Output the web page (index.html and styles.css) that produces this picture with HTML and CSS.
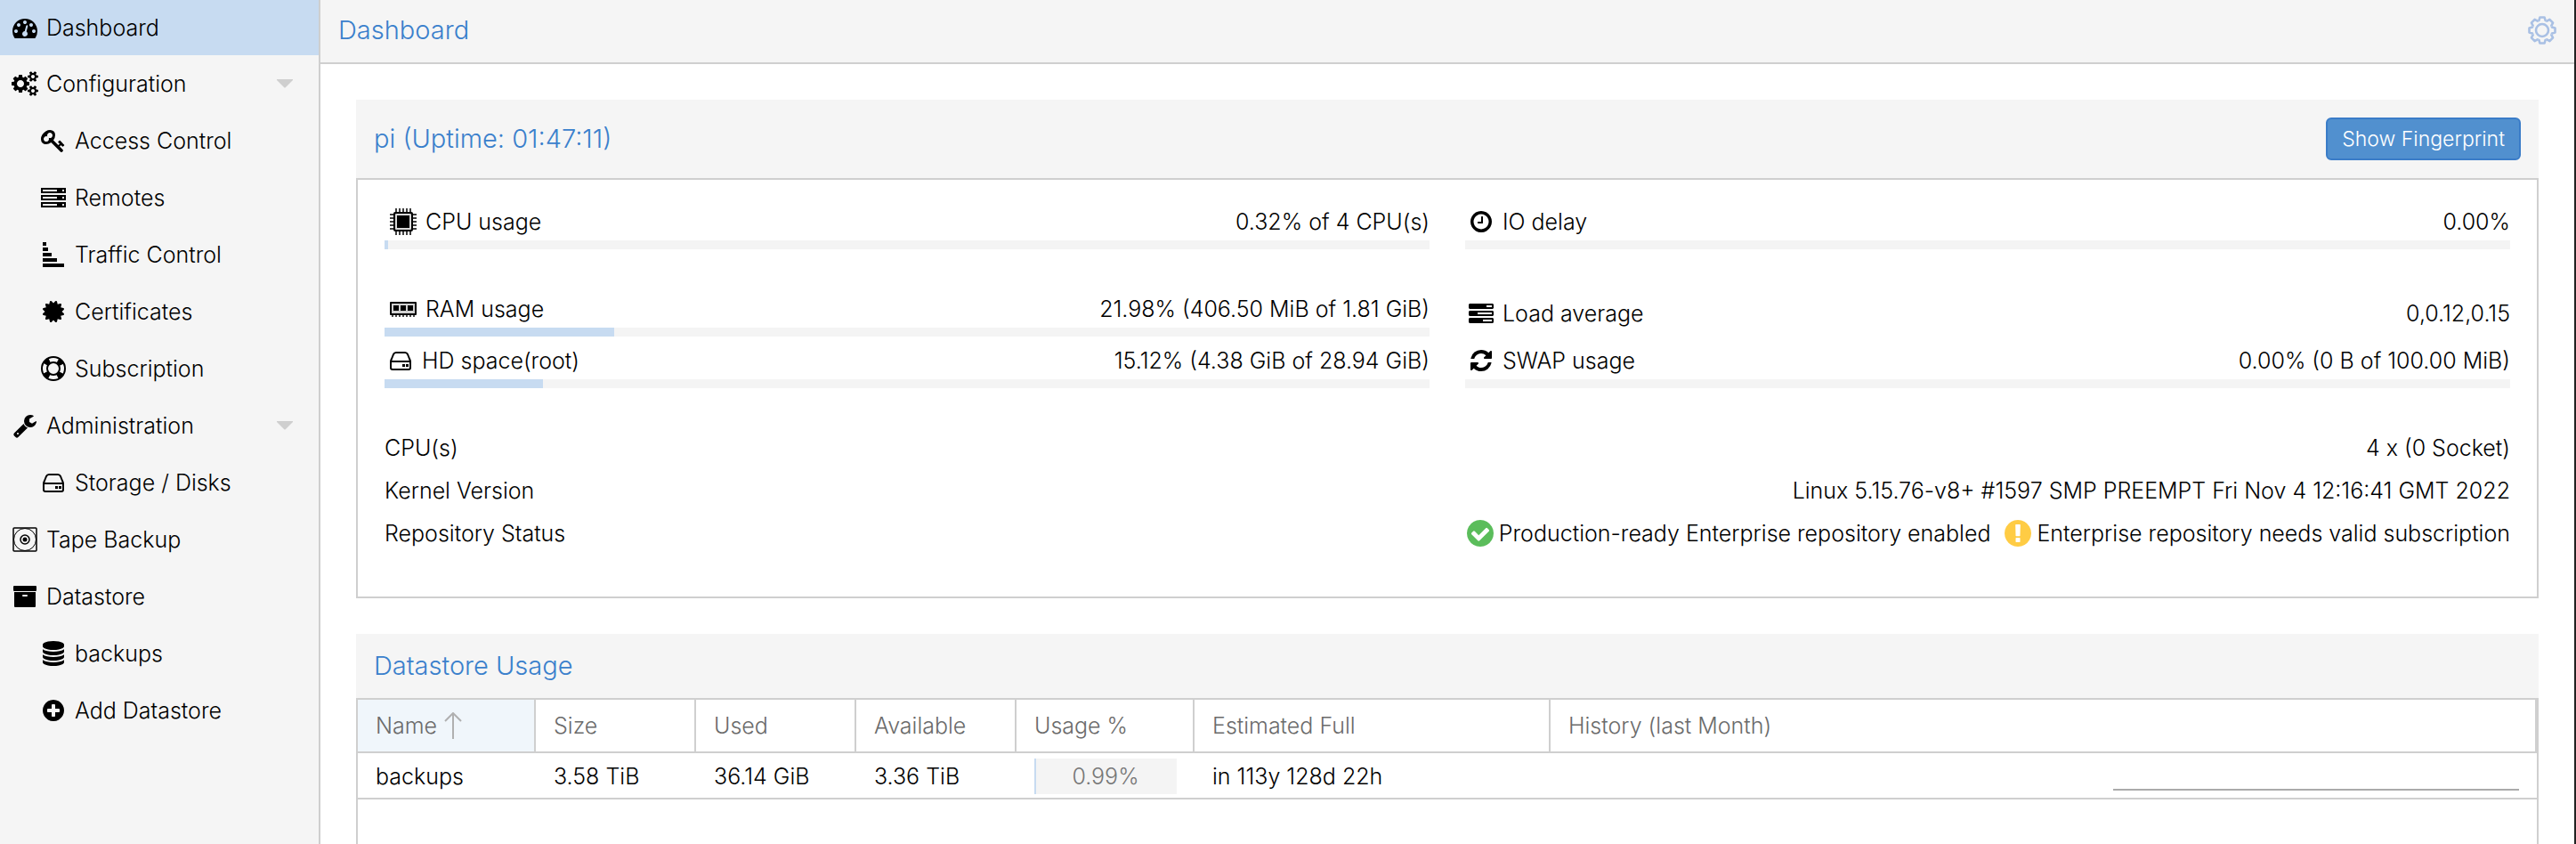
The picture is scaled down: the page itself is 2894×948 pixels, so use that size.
FILE: index.html
```html
<!DOCTYPE html>
<html lang="en">
<head>
<meta charset="utf-8">
<title>pi - Backup Server Dashboard</title>
<link rel="stylesheet" href="styles.css">
</head>
<body>
<svg class="sprite" aria-hidden="true">
  <symbol id="i-dash" viewBox="0 0 1792 1792"><path d="M384 1152q0-53-37.500-90.500t-90.500-37.500-90.500 37.500-37.500 90.500 37.500 90.500 90.500 37.500 90.500-37.500 37.500-90.500zm192-448q0-53-37.500-90.500t-90.500-37.500-90.500 37.500-37.500 90.500 37.500 90.500 90.500 37.500 90.500-37.500 37.500-90.500zm428 481l101-382q6-26-7.500-48.500t-38.500-29.500-48 6.500-30 39.500l-101 382q-60 5-107 43.500t-63 98.500q-20 77 20 146t117 89 146-20 89-117q16-60-6-117t-72-91zm660-33q0-53-37.500-90.500t-90.500-37.500-90.500 37.500-37.500 90.500 37.500 90.500 90.500 37.500 90.500-37.500 37.500-90.500zm-640-640q0-53-37.500-90.500t-90.500-37.500-90.500 37.500-37.500 90.500 37.500 90.500 90.500 37.500 90.500-37.500 37.500-90.500zm448 192q0-53-37.500-90.500t-90.500-37.500-90.500 37.500-37.500 90.500 37.500 90.500 90.500 37.500 90.500-37.500 37.500-90.500zm320 448q0 261-141 483-19 29-54 29h-1402q-35 0-54-29-141-221-141-483 0-182 71-348t191-286 286-191 348-71 348 71 286 191 191 286 71 348z"/></symbol>
  <symbol id="i-cogs" viewBox="0 0 1920 1792"><path d="M896 896q0-106-75-181t-181-75-181 75-75 181 75 181 181 75 181-75 75-181zm768 512q0-52-38-90t-90-38-90 38-38 90q0 53 37.500 90.500t90.500 37.500 90.500-37.500 37.500-90.500zm0-1024q0-52-38-90t-90-38-90 38-38 90q0 53 37.500 90.500t90.500 37.500 90.500-37.500 37.500-90.500zm-384 421v185q0 10-7 19.500t-16 10.500l-155 24q-11 35-32 76 34 48 90 115 7 11 7 20 0 12-7 19-23 30-82.500 89.500t-78.500 59.500q-11 0-21-7l-115-90q-37 19-77 31-11 108-23 155-7 24-30 24h-186q-11 0-20-7.500t-10-17.500l-23-153q-34-10-75-31l-118 89q-7 7-20 7-11 0-21-8-144-133-144-160 0-9 7-19 10-14 41-53t47-61q-23-44-35-82l-152-24q-10-1-17-9.500t-7-19.500v-185q0-10 7-19.500t16-10.500l155-24q11-35 32-76-34-48-90-115-7-11-7-20 0-12 7-20 22-30 82-89t79-59q11 0 21 7l115 90q34-18 77-32 11-108 23-154 7-24 30-24h186q11 0 20 7.500t10 17.500l23 153q34 10 75 31l118-89q8-7 20-7 11 0 21 8 144 133 144 160 0 8-7 19-12 16-42 54t-45 60q23 48 34 82l152 23q10 2 17 10.500t7 19.500zm640 533v140q0 16-149 31-12 27-30 52 51 113 51 138 0 4-4 7-122 71-124 71-8 0-46-47t-52-68q-20 2-30 2t-30-2q-14 21-52 68t-46 47q-2 0-124-71-4-3-4-7 0-25 51-138-18-25-30-52-149-15-149-31v-140q0-16 149-31 13-29 30-52-51-113-51-138 0-4 4-7 4-2 35-20t59-34 30-16q8 0 46 46.500t52 67.500q20-2 30-2t30 2q51-71 92-112l6-2q4 0 124 70 4 3 4 7 0 25-51 138 17 23 30 52 149 15 149 31zm0-1024v140q0 16-149 31-12 27-30 52 51 113 51 138 0 4-4 7-122 71-124 71-8 0-46-47t-52-68q-20 2-30 2t-30-2q-14 21-52 68t-46 47q-2 0-124-71-4-3-4-7 0-25 51-138-18-25-30-52-149-15-149-31v-140q0-16 149-31 13-29 30-52-51-113-51-138 0-4 4-7 4-2 35-20t59-34 30-16q8 0 46 46.500t52 67.500q20-2 30-2t30 2q51-71 92-112l6-2q4 0 124 70 4 3 4 7 0 25-51 138 17 23 30 52 149 15 149 31z"/></symbol>
  <symbol id="i-key" viewBox="0 0 1792 1792"><path d="M832 512q0-80-56-136t-136-56-136 56-56 136q0 42 19 83-41-19-83-19-80 0-136 56t-56 136 56 136 136 56 136-56 56-136q0-42-19-83 41 19 83 19 80 0 136-56t56-136zm851 704q0 17-49 66t-66 49q-9 0-28.500-16t-36.500-33-38.500-40-24.500-26l-96 96 220 220q28 28 28 68 0 42-39 81t-81 39q-40 0-68-28l-671-671q-176 131-365 131-163 0-265.500-102.500t-102.500-265.500q0-160 95-313t248-248 313-95q163 0 265.500 102.500t102.500 265.500q0 189-131 365l355 355 96-96q-3-3-26-24.500t-40-38.500-33-36.500-16-28.500q0-17 49-66t66-49q13 0 23 10 6 6 46 44.500t82 79.500 86.500 86 73 78 28.500 41z"/></symbol>
  <symbol id="i-server" viewBox="0 0 28 28"><path fill-rule="evenodd" d="M0 3h28v6H0zM2 5h16v2H2zM24 5h2v2h-2zM0 11h28v6H0zM2 13h16v2H2zM24 13h2v2h-2zM0 19h28v6H0zM2 21h16v2H2zM24 21h2v2h-2z"/></symbol>
  <symbol id="i-traffic" viewBox="0 0 28 28"><path d="M2 0h4v4H2zM2 6h6v4H2zM2 12h10v4H2zM2 18h16v4H2zM2 24h24v4H2z"/></symbol>
  <symbol id="i-cert" viewBox="0 0 1792 1792"><path d="M1504 896l138 135q30 28 20 70-12 41-52 51l-188 48 53 186q12 41-19 70-29 31-70 19l-186-53-48 188q-10 40-51 52-12 2-19 2-31 0-51-22l-135-138-135 138q-28 30-70 20-41-11-51-52l-48-188-186 53q-41 12-70-19-31-29-19-70l53-186-188-48q-40-10-52-51-10-42 20-70l138-135-138-135q-30-28-20-70 12-41 52-51l188-48-53-186q-12-41 19-70 29-31 70-19l186 53 48-188q10-41 51-51 41-12 70 19l135 139 135-139q29-30 70-19 41 10 51 51l48 188 186-53q41-12 70 19 31 29 19 70l-53 186 188 48q40 10 52 51 10 42-20 70z"/></symbol>
  <symbol id="i-ring" viewBox="0 0 28 28"><g fill="none" stroke="currentColor"><circle cx="14" cy="14" r="13" stroke-width="2"/><circle cx="14" cy="14" r="7" stroke-width="2"/><circle cx="14" cy="14" r="10" stroke-width="7" stroke-dasharray="6.200 9.508" stroke-dashoffset="-4.754"/></g></symbol>
  <symbol id="i-wrench" viewBox="0 0 1792 1792"><path d="M448 1472q0-26-19-45t-45-19-45 19-19 45 19 45 45 19 45-19 19-45zm644-420l-682 682q-37 37-90 37-52 0-91-37l-106-108q-38-36-38-90 0-53 38-91l681-681q39 98 114.500 173.500t173.500 114.500zm634-435q0 39-23 106-47 134-164.500 217.500t-258.500 83.500q-185 0-316.500-131.500t-131.500-316.500 131.500-316.500 316.500-131.500q58 0 121.500 16.500t107.500 46.500q16 11 16 28t-16 28l-293 169v224l193 107q5-3 79-48.500t135.500-81 70.500-35.500q15 0 23.500 10t8.500 25z"/></symbol>
  <symbol id="i-hdd" viewBox="0 0 28 28"><path fill="none" stroke="currentColor" stroke-width="2" stroke-linejoin="round" d="M3 15v7q0 2 2 2h18q2 0 2-2v-7q0-1-1-3l-2-5q-1-2-3-2H9Q7 5 6 7l-2 5q-1 2-1 3h22"/><path d="M16 18h3v3h-3zM20 18h3v3h-3z"/></symbol>
  <symbol id="i-tape" viewBox="0 0 28 28"><g fill="none" stroke="currentColor"><rect x="1" y="1" width="26" height="26" rx="1" stroke-width="1.500"/><circle cx="14" cy="14" r="12.500"/><circle cx="14" cy="14" r="5" stroke-width="1.500"/></g><circle cx="14" cy="14" r="2.500"/></symbol>
  <symbol id="i-archive" viewBox="0 0 28 28"><path d="M2 2h24q1 0 1 1v4q0 1-1 1H2Q1 8 1 7V3q0-1 1-1z"/><path fill-rule="evenodd" d="M2 9h24v16q0 1-1 1H3q-1 0-1-1zM12 12q-1 0-1 1t1 1h4q1 0 1-1t-1-1z"/></symbol>
  <symbol id="i-db" viewBox="0 0 1792 1792"><path d="M896 768q237 0 443-43t325-127v170q0 69-103 128t-280 93.500-385 34.500-385-34.500-280-93.500-103-128v-170q119 84 325 127t443 43zm0 768q237 0 443-43t325-127v170q0 69-103 128t-280 93.500-385 34.500-385-34.500-280-93.500-103-128v-170q119 84 325 127t443 43zm0-384q237 0 443-43t325-127v170q0 69-103 128t-280 93.500-385 34.500-385-34.500-280-93.500-103-128v-170q119 84 325 127t443 43zm0-1152q208 0 385 34.500t280 93.500 103 128v128q0 69-103 128t-280 93.500-385 34.500-385-34.500-280-93.500-103-128v-128q0-69 103-128t280-93.500 385-34.500z"/></symbol>
  <symbol id="i-plus" viewBox="0 0 1792 1792"><path d="M1344 960v-128q0-26-19-45t-45-19h-256v-256q0-26-19-45t-45-19h-128q-26 0-45 19t-19 45v256h-256q-26 0-45 19t-19 45v128q0 26 19 45t45 19h256v256q0 26 19 45t45 19h128q26 0 45-19t19-45v-256h256q26 0 45-19t19-45zm320-64q0 209-103 385.500t-279.500 279.500-385.500 103-385.500-103-279.500-279.500-103-385.500 103-385.500 279.500-279.500 385.500-103 385.500 103 279.500 279.500 103 385.500z"/></symbol>
  <symbol id="i-clock" viewBox="0 0 1792 1792"><path d="M1024 544v448q0 14-9 23t-23 9h-320q-14 0-23-9t-9-23v-64q0-14 9-23t23-9h224v-352q0-14 9-23t23-9h64q14 0 23 9t9 23zm416 352q0-148-73-273t-198-198-273-73-273 73-198 198-73 273 73 273 198 198 273 73 273-73 198-198 73-273zm224 0q0 209-103 385.500t-279.500 279.500-385.500 103-385.500-103-279.500-279.500-103-385.500 103-385.500 279.500-279.500 385.500-103 385.500 103 279.500 279.500 103 385.500z"/></symbol>
  <symbol id="i-tasks" viewBox="0 0 28 28"><path fill-rule="evenodd" d="M1 3h26l1 1v4l-1 1H1L0 8V4zM20 5h6v2h-6zM1 11h26l1 1v4l-1 1H1l-1-1v-4zM10 13h16v2H10zM1 19h26l1 1v4l-1 1H1l-1-1v-4zM16 21h10v2H16z"/></symbol>
  <symbol id="i-refresh" viewBox="0 0 1792 1792"><path d="M1639 1056q0 5-1 7-64 268-268 434.500t-478 166.500q-146 0-282.500-55t-243.500-157l-129 129q-19 19-45 19t-45-19-19-45v-448q0-26 19-45t45-19h448q26 0 45 19t19 45-19 45l-137 137q71 66 161 102t187 36q134 0 250-65t186-179q11-17 53-117 8-23 30-23h192q13 0 22.500 9.500t9.500 22.500zm25-800v448q0 26-19 45t-45 19h-448q-26 0-45-19t-19-45 19-45l138-138q-148-137-349-137-134 0-250 65t-186 179q-11 17-53 117-8 23-30 23h-199q-13 0-22.500-9.500t-9.500-22.500v-7q65-268 270-434.500t480-166.500q146 0 284 55.500t245 156.500l130-129q19-19 45-19t45 19 19 45z"/></symbol>
  <symbol id="i-cpu" viewBox="0 0 32 32"><path stroke="currentColor" stroke-width="2" opacity=".75" d="M9 1v30M13 1v30M17 1v30M21 1v30M25 1v30M2 8h30M2 12h30M2 16h30M2 20h30M2 24h30"/><rect x="6" y="5" width="22" height="22" rx="2"/><rect x="8" y="7" width="18" height="18" rx="1" fill="#d8d8d8"/><rect x="10" y="9" width="14" height="14"/></symbol>
  <symbol id="i-ram" viewBox="0 0 32 32"><path stroke="currentColor" stroke-width="2" opacity=".7" d="M5 22v3M9 22v3M13 22v3M17 22v3M21 22v3M25 22v3M29 22v3"/><rect x="2" y="8" width="30" height="15" rx="1"/><rect x="4" y="10" width="26" height="11" fill="#d0d0d0"/><path d="M6 12h6v6H6zM14 12h6v6h-6zM22 12h6v6h-6z"/></symbol>
  <symbol id="i-ok" viewBox="128 128 1536 1536"><path d="M1412 734q0-28-18-46l-91-90q-19-19-45-19t-45 19l-408 407-226-226q-19-19-45-19t-45 19l-91 90q-18 18-18 46 0 27 18 45l362 362q19 19 45 19 27 0 46-19l543-543q18-18 18-45zm252 162q0 209-103 385.500t-279.500 279.500-385.500 103-385.500-103-279.500-279.500-103-385.500 103-385.500 279.500-279.500 385.500-103 385.500 103 279.500 279.500 103 385.500z"/></symbol>
  <symbol id="i-warn" viewBox="128 128 1536 1536"><path d="M896 128q209 0 385.500 103t279.500 279.500 103 385.500-103 385.500-279.500 279.500-385.500 103-385.500-103-279.500-279.500-103-385.500 103-385.500 279.500-279.500 385.500-103zm128 1247v-190q0-14-9-23.500t-22-9.500h-192q-13 0-23 10t-10 23v190q0 13 10 23t23 10h192q13 0 22-9.500t9-23.500zm-2-344l18-621q0-12-10-18-10-8-24-8h-220q-14 0-24 8-10 6-10 18l17 621q0 10 10 17.500t24 7.500h185q14 0 23.500-7.500t10.500-17.500z"/></symbol>
  <symbol id="i-caret" viewBox="0 0 18 10"><path d="M0 0h18v1l-8 8q-1 1-2 0L0 1z"/></symbol>
  <symbol id="i-sort" viewBox="0 0 20 30"><path fill="none" stroke="currentColor" stroke-width="2" d="M10 30V2M1 10l9-9 9 9"/></symbol>
  <symbol id="i-gear" viewBox="-16 -16 32 32"><g fill="none" stroke="currentColor" stroke-width="2.600" stroke-linejoin="round"><path id="tooth" d="M-4.320-10.440L-3.600-11L-2.600-14.500H2.600L3.600-11L4.320-10.440"/><use href="#tooth" transform="rotate(45)"/><use href="#tooth" transform="rotate(90)"/><use href="#tooth" transform="rotate(135)"/><use href="#tooth" transform="rotate(180)"/><use href="#tooth" transform="rotate(225)"/><use href="#tooth" transform="rotate(270)"/><use href="#tooth" transform="rotate(315)"/><circle r="7"/></g></symbol>
</svg>

<div class="app">
  <nav class="sidebar" aria-label="Main">
    <a class="nav-item active" href="#"><svg class="icon"><use href="#i-dash"/></svg>Dashboard</a>
    <a class="nav-item" href="#"><svg class="icon"><use href="#i-cogs"/></svg>Configuration<svg class="caret"><use href="#i-caret"/></svg></a>
    <a class="nav-item nested" href="#"><svg class="icon"><use href="#i-key"/></svg>Access Control</a>
    <a class="nav-item nested" href="#"><svg class="icon"><use href="#i-server"/></svg>Remotes</a>
    <a class="nav-item nested" href="#"><svg class="icon"><use href="#i-traffic"/></svg>Traffic Control</a>
    <a class="nav-item nested" href="#"><svg class="icon"><use href="#i-cert"/></svg>Certificates</a>
    <a class="nav-item nested" href="#"><svg class="icon"><use href="#i-ring"/></svg>Subscription</a>
    <a class="nav-item" href="#"><svg class="icon"><use href="#i-wrench"/></svg>Administration<svg class="caret"><use href="#i-caret"/></svg></a>
    <a class="nav-item nested" href="#"><svg class="icon"><use href="#i-hdd"/></svg>Storage / Disks</a>
    <a class="nav-item" href="#"><svg class="icon"><use href="#i-tape"/></svg>Tape Backup</a>
    <a class="nav-item" href="#"><svg class="icon"><use href="#i-archive"/></svg>Datastore</a>
    <a class="nav-item nested" href="#"><svg class="icon"><use href="#i-db"/></svg>backups</a>
    <a class="nav-item nested" href="#"><svg class="icon"><use href="#i-plus"/></svg>Add Datastore</a>
  </nav>

  <main class="content">
    <header class="topbar">
      <h1 class="title">Dashboard</h1>
      <button class="gear" type="button" aria-label="Dashboard options"><svg class="gear-icon"><use href="#i-gear"/></svg></button>
    </header>

    <div class="panels">
      <section class="panel">
        <header class="panel-head panel-head-tall">
          <h2 class="title">pi (Uptime: 01:47:11)</h2>
          <button class="btn" type="button">Show Fingerprint</button>
        </header>
        <div class="panel-body status">
          <div class="meters">
            <div class="meter">
              <div class="line"><svg class="icon wide"><use href="#i-cpu"/></svg><span>CPU usage</span><span class="value">0.32% of 4 CPU(s)</span></div>
              <div class="bar"><div class="fill" style="width:0.32%"></div></div>
            </div>
            <div class="meter">
              <div class="line"><svg class="icon"><use href="#i-clock"/></svg><span>IO delay</span><span class="value">0.00%</span></div>
              <div class="bar"></div>
            </div>
          </div>
          <div class="meters">
            <div class="meter">
              <div class="line"><svg class="icon wide"><use href="#i-ram"/></svg><span>RAM usage</span><span class="value">21.98% (406.50 MiB of 1.81 GiB)</span></div>
              <div class="bar"><div class="fill" style="width:21.98%"></div></div>
            </div>
            <div class="meter no-bar">
              <div class="line"><svg class="icon"><use href="#i-tasks"/></svg><span>Load average</span><span class="value">0,0.12,0.15</span></div>
            </div>
            <div class="meter">
              <div class="line"><svg class="icon"><use href="#i-hdd"/></svg><span>HD space(root)</span><span class="value">15.12% (4.38 GiB of 28.94 GiB)</span></div>
              <div class="bar"><div class="fill" style="width:15.12%"></div></div>
            </div>
            <div class="meter">
              <div class="line"><svg class="icon"><use href="#i-refresh"/></svg><span>SWAP usage</span><span class="value">0.00% (0 B of 100.00 MiB)</span></div>
              <div class="bar"></div>
            </div>
          </div>
          <div class="facts">
            <div class="line plain"><span>CPU(s)</span><span class="value">4 x (0 Socket)</span></div>
            <div class="line plain"><span>Kernel Version</span><span class="value">Linux 5.15.76-v8+ #1597 SMP PREEMPT Fri Nov 4 12:16:41 GMT 2022</span></div>
            <div class="line plain"><span>Repository Status</span>
              <span class="value repo">
                <span class="state"><svg class="state-icon ok"><use href="#i-ok"/></svg>Production-ready Enterprise repository enabled</span>
                <span class="state"><svg class="state-icon warn"><use href="#i-warn"/></svg>Enterprise repository needs valid subscription</span>
              </span>
            </div>
          </div>
        </div>
      </section>

      <section class="panel grow">
        <header class="panel-head">
          <h2 class="title">Datastore Usage</h2>
        </header>
        <div class="panel-body">
          <table class="grid">
            <colgroup><col class="w-m"><col class="w-s"><col class="w-s"><col class="w-s"><col class="w-m"><col class="w-l"><col></colgroup>
            <thead>
              <tr><th class="sorted"><span class="sort">Name<svg class="sort-icon"><use href="#i-sort"/></svg></span></th><th>Size</th><th>Used</th><th>Available</th><th>Usage %</th><th>Estimated Full</th><th>History (last Month)</th></tr>
            </thead>
            <tbody>
              <tr><td>backups</td><td>3.58 TiB</td><td>36.14 GiB</td><td>3.36 TiB</td><td><div class="usage"><div class="usage-fill" style="width:0.99%"></div>0.99%</div></td><td>in 113y 128d 22h</td><td><div class="spark"></div></td></tr>
            </tbody>
          </table>
        </div>
      </section>
    </div>
  </main>
</div>
</body>
</html>
```
FILE: styles.css
```css
* {
  box-sizing: border-box;
}

body {
  margin: 0;
  font-family: Inter, "Liberation Sans", sans-serif;
  font-size: 25px;
  font-weight: 300;
  line-height: 32px;
  color: #000;
  background: #fff;
}

svg {
  display: block;
  flex: none;
  fill: currentColor;
}

.sprite {
  position: absolute;
  width: 0;
  height: 0;
}

.app {
  display: flex;
  height: 100vh;
  overflow: hidden;
  border-right: 2px solid #222;
}

/* Navigation */
.sidebar {
  flex: none;
  width: 360px;
  background: #f5f5f5;
  border-right: 2px solid #cfcfcf;
}

.nav-item {
  display: flex;
  align-items: center;
  gap: 8px;
  height: 64px;
  padding: 0 29px 0 12px;
  color: #000;
  text-decoration: none;
}

.nav-item.nested {
  padding-left: 44px;
}

.nav-item.active {
  height: 62px;
  background: #c7dbf1;
}

.icon {
  width: 28px;
  height: 28px;
}

.nav-item .icon {
  width: 32px;
}

.icon.wide {
  width: 32px;
  height: 32px;
}

.caret {
  width: 18px;
  height: 10px;
  margin-left: auto;
  color: #cfcfcf;
}

/* Main area */
.content {
  flex: 1;
  min-width: 0;
  display: flex;
  flex-direction: column;
}

.title {
  margin: 0;
  font-size: 29px;
  font-weight: 300;
  line-height: 36px;
  color: #3a80cc;
}

.topbar {
  flex: none;
  display: flex;
  align-items: center;
  justify-content: space-between;
  height: 72px;
  padding: 0 20px 2px;
  background: #f5f5f5;
  border-bottom: 2px solid #cfcfcf;
}

.gear {
  padding: 0;
  border: 0;
  background: none;
  color: #a9c0e4;
}

.gear-icon {
  width: 32px;
  height: 32px;
}

.panels {
  flex: 1;
  display: flex;
  flex-direction: column;
  gap: 40px;
  min-height: 0;
  padding: 40px 40px 0;
}

.panel {
  flex: none;
}

.panel-head {
  display: flex;
  align-items: center;
  justify-content: space-between;
  height: 72px;
  padding: 0 20px;
  background: #f5f5f5;
}

.panel-head-tall {
  height: 88px;
}

.btn {
  height: 48px;
  padding: 0 16px;
  border: 2px solid #3a7cc8;
  border-radius: 6px;
  background: #5190cf;
  color: #fff;
  font: inherit;
  font-size: 23px;
}

.panel-body {
  border: 2px solid #cfcfcf;
}

.grow .panel-body {
  min-height: 400px;
}

/* Server status */
.status {
  display: flex;
  flex-direction: column;
  gap: 40px;
  padding: 20px 30px 50px;
}

.meters {
  display: grid;
  grid-template-columns: 1fr 1fr;
  column-gap: 40px;
}

.meter {
  height: 58px;
}

.line {
  display: flex;
  align-items: center;
  gap: 10px;
  height: 48px;
  padding: 6px 0 0 4px;
}

.no-bar .line {
  height: 58px;
}

.line.plain {
  padding-left: 0;
}

.value {
  margin-left: auto;
}

.bar {
  height: 10px;
  background: #f4f4f4;
}

.fill {
  height: 10px;
  background: #c7dbf1;
}

.repo {
  display: flex;
  gap: 16px;
}

.state {
  display: flex;
  align-items: center;
  gap: 6px;
}

.state-icon {
  width: 30px;
  height: 30px;
}

.ok {
  color: #5bbd5b;
}

.warn {
  color: #fc4;
}

/* Datastore table */
.grid {
  width: 100%;
  table-layout: fixed;
  border-collapse: separate;
  border-spacing: 0;
}

.w-s {
  width: 180px;
}

.w-m {
  width: 200px;
}

.w-l {
  width: 400px;
}

.grid th {
  height: 60px;
  padding: 0 20px;
  border-right: 2px solid #cfcfcf;
  border-bottom: 2px solid #cfcfcf;
  color: #6b6b6b;
  font-weight: 300;
  text-align: left;
}

.grid .sorted {
  background: #f0f6fb;
}

.sort {
  display: flex;
  align-items: center;
  gap: 8px;
}

.sort-icon {
  width: 20px;
  height: 30px;
  color: #b0b0b0;
}

.grid td {
  height: 52px;
  padding: 2px 20px 0;
  border-bottom: 2px solid #cfcfcf;
}

.usage {
  position: relative;
  height: 40px;
  line-height: 40px;
  background: #f4f4f4;
  color: #777;
  text-align: center;
}

.usage-fill {
  position: absolute;
  top: 0;
  bottom: 0;
  left: 0;
  min-width: 2px;
  background: #c7dbf1;
}

.spark {
  width: 456px;
  height: 32px;
  margin-left: auto;
  border-bottom: 2px solid #aaa;
}
```
